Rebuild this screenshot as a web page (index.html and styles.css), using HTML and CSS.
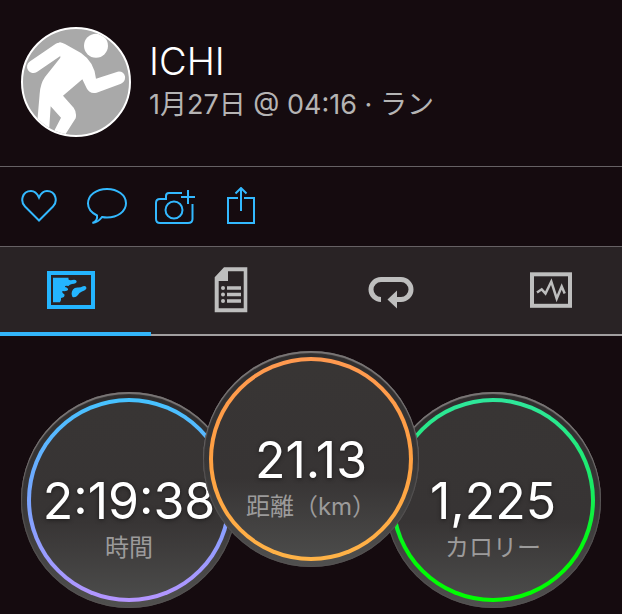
FILE: index.html
```html
<!DOCTYPE html>
<html lang="ja">
<head>
    <meta charset="UTF-8">
    <meta name="viewport" content="width=device-width, initial-scale=1.0">
    <title>ICHI - ラン</title>
    <link rel="stylesheet" href="styles.css">
</head>
<body>
<!-- Profile -->
<header class="profile">
    <svg class="avatar" viewBox="6 6 318 318" aria-hidden="true">
        <path d="M37 119L115 66" stroke="#fff" stroke-width="38" stroke-linecap="round"/>
        <path d="M115 46Q122 46 132 51L180 78Q220 105 225 155L290 134Q308 132 312 148Q314 164 300 170L227 197Q206 202 197 184L184 157L126 206L158 242Q168 256 164 274L128 330H90L120 272L89 238L83 330H45L56 200Q58 170 72 150L118 92Z" fill="#fff"/>
        <circle cx="225" cy="56" r="36" fill="#fff"/>
    </svg>
    <div class="profile-text">
        <h1>ICHI</h1>
        <p>1月27日 @ 04:16 · ラン</p>
    </div>
</header>

<!-- Actions -->
<div class="actions">
    <button type="button" aria-label="いいね">
        <svg width="40" height="38" viewBox="0 0 40 38">
            <path d="M19 33.500L5 19.500C0 14.500 2 4 11 4Q16 4 19 10.500Q22 4 27 4C36 4 38 14.500 33 19.500Z"/>
        </svg>
    </button>
    <button type="button" aria-label="コメント">
        <svg width="42" height="38" viewBox="0 0 42 38">
            <path d="M11 28.500C5 25.500 2 21 2 16.500C2 8 10.500 2 21 2S40 8 40 16.300S31.500 30.500 21 30.500Q18.500 30.500 16 30Q12 35.500 6.500 36Q12 33.500 11 28.500Z"/>
        </svg>
    </button>
    <button type="button" aria-label="写真を追加">
        <svg width="44" height="38" viewBox="0 0 44 38">
            <path d="M28 6H15Q12 6 12 9V12H6Q2 12 2 16V32Q2 36 6 36H34Q38.500 36 38.500 32V17M34 3V17M27 10H41"/>
            <circle cx="20" cy="23" r="8.500"/>
        </svg>
    </button>
    <button type="button" aria-label="共有">
        <svg width="34" height="38" viewBox="0 0 34 38">
            <path d="M14 11H4V36H30V11H20M17 1V24M11.500 6.500L17 1L22.500 6.500"/>
        </svg>
    </button>
</div>

<!-- Tabs -->
<nav class="tabs">
    <button type="button" class="tab active" aria-label="概要">
        <svg width="48" height="48" viewBox="0 0 48 48">
            <rect x="2" y="7" width="44" height="34" fill="none" stroke="currentColor" stroke-width="4"/>
            <path d="M6 11.700H21.500C21 14 22.500 14.500 25 14Q29.500 13 29.700 15.500Q29.500 17.500 25 18Q22.500 18.500 21.500 20Q17.500 19 18 21Q21.500 22 21 24Q20 25.500 15.500 25Q14.500 26.500 17.500 28.500Q18 31.500 14 32Q14.500 34.500 13 36.300H6Z"/>
            <path d="M25.500 31Q23.500 27 26 23.500Q27.500 21.300 31 21.500Q34 21.500 36 20.300Q39 19.300 39.500 22Q39 24 35 25.500Q32 26.500 31 29Q28.500 32 25.500 31Z"/>
        </svg>
    </button>
    <button type="button" class="tab" aria-label="詳細">
        <svg width="48" height="48" viewBox="0 0 48 48">
            <path fill-rule="evenodd" d="M17 1.300H40.300V46.300H7.700V11.300ZM21 5.300V15H11.700V42.300H36.700V5.300Z"/>
            <path d="M20 22H34M20 28.500H34M20 35H34" stroke="currentColor" stroke-width="3.500"/>
            <circle cx="16" cy="22" r="2"/>
            <circle cx="16" cy="28.500" r="2"/>
            <circle cx="16" cy="35" r="2"/>
        </svg>
    </button>
    <button type="button" class="tab" aria-label="ラップ">
        <svg width="48" height="48" viewBox="0 0 48 48">
            <path d="M14 33.500A10 10 0 0 1 14 13.500H34A10 10 0 0 1 34 33.500H28" fill="none" stroke="currentColor" stroke-width="5"/>
            <path d="M20.500 33.500L30 24.500V42.500Z"/>
        </svg>
    </button>
    <button type="button" class="tab" aria-label="グラフ">
        <svg width="48" height="48" viewBox="0 0 48 48">
            <rect x="5" y="8.300" width="38" height="31.500" fill="none" stroke="currentColor" stroke-width="4"/>
            <path d="M10 26.500L14.700 23.300L18.500 27.500L24.300 15.500L29.700 32.500L34.700 20.500L37.700 27.500" fill="none" stroke="currentColor" stroke-width="2.500"/>
        </svg>
    </button>
</nav>

<!-- Stats -->
<main class="stats">
    <div class="stat time">
        <div class="ring">
            <strong>2:19:38</strong>
            <span>時間</span>
        </div>
    </div>
    <div class="stat distance">
        <div class="ring">
            <strong>21.13</strong>
            <span>距離（km）</span>
        </div>
    </div>
    <div class="stat calories">
        <div class="ring">
            <strong>1,225</strong>
            <span>カロリー</span>
        </div>
    </div>
</main>
</body>
</html>
```
FILE: styles.css
```css
* {
    box-sizing: border-box;
}

body {
    margin: 0;
    background-color: #150b0f;
    color: #fff;
    font-family: Inter, "Noto Sans CJK JP", sans-serif;
    overflow-x: hidden;
}

button {
    padding: 0;
    border: none;
    background: none;
    cursor: pointer;
}

svg {
    display: block;
}

/* Profile */
.profile {
    display: flex;
    align-items: center;
    gap: 18px;
    padding: 27px 21px 29px;
}

.avatar {
    flex: none;
    width: 110px;
    height: 110px;
    border: 2px solid #fff;
    border-radius: 50%;
    background-color: #a9a9a9;
}

.profile h1 {
    margin: 0;
    font-size: 38px;
    font-weight: 300;
    line-height: 46px;
}

.profile p {
    margin: 0;
    color: #b5b4b4;
    font-size: 27px;
    font-weight: 400;
    line-height: 42px;
}

/* Actions */
.actions {
    display: flex;
    gap: 26px;
    padding: 20px 20px 21px;
    border-top: 1px solid #666164;
    border-bottom: 1px solid #666164;
}

.actions svg {
    fill: none;
    stroke: #33b9ff;
    stroke-width: 2;
}

/* Tabs */
.tabs {
    display: grid;
    grid-template-columns: repeat(4, 1fr);
    margin: 0 -9px;
    background-color: #292325;
    box-shadow: inset 0 -2px #a19fa0;
}

.tab {
    display: flex;
    justify-content: center;
    padding: 19px 0 22px;
    color: #bebebe;
    fill: currentColor;
}

.tab.active {
    color: #24b5ff;
    box-shadow: inset 0 -4px #33b5fa;
}

/* Stats */
.stats {
    display: flex;
    justify-content: center;
    padding: 15px 0 6px;
}

.stat {
    flex: none;
    width: 216px;
    height: 216px;
    margin-top: 41px;
    padding: 6px;
    border-radius: 50%;
    background: linear-gradient(#302e2e, #383636 50%, #50504f);
    box-shadow: inset 0 2px 1px #7b7777, inset 0 0 1px 1px #555252;
}

.distance {
    z-index: 1;
    margin: 0 -34px 41px;
}

/* gradient border: fill in the padding box, ring colour in the border box */
.ring {
    display: flex;
    flex-direction: column;
    align-items: center;
    height: 100%;
    padding-top: 69px;
    border: 4px solid transparent;
    border-radius: 50%;
    background: linear-gradient(#383534, #373434 60%, #4b4b4a) padding-box, var(--ring) border-box;
    white-space: nowrap;
}

.time {
    --ring: linear-gradient(#45c3ff, #79a4ff 50%, #b595ff);
}

.distance {
    --ring: linear-gradient(#ff9950, #ffa042 50%, #ffb347);
}

.calories {
    --ring: linear-gradient(#2fe79c, #18eb63 45%, #00fa08 75%, #00ff00);
}

.ring strong {
    font-size: 50px;
    font-weight: 400;
    line-height: 60px;
    text-shadow: 0 1px 4px rgba(0, 0, 0, 0.5);
}

.ring span {
    color: #9c9b9b;
    font-size: 24px;
    font-weight: 400;
    line-height: 34px;
}
```
